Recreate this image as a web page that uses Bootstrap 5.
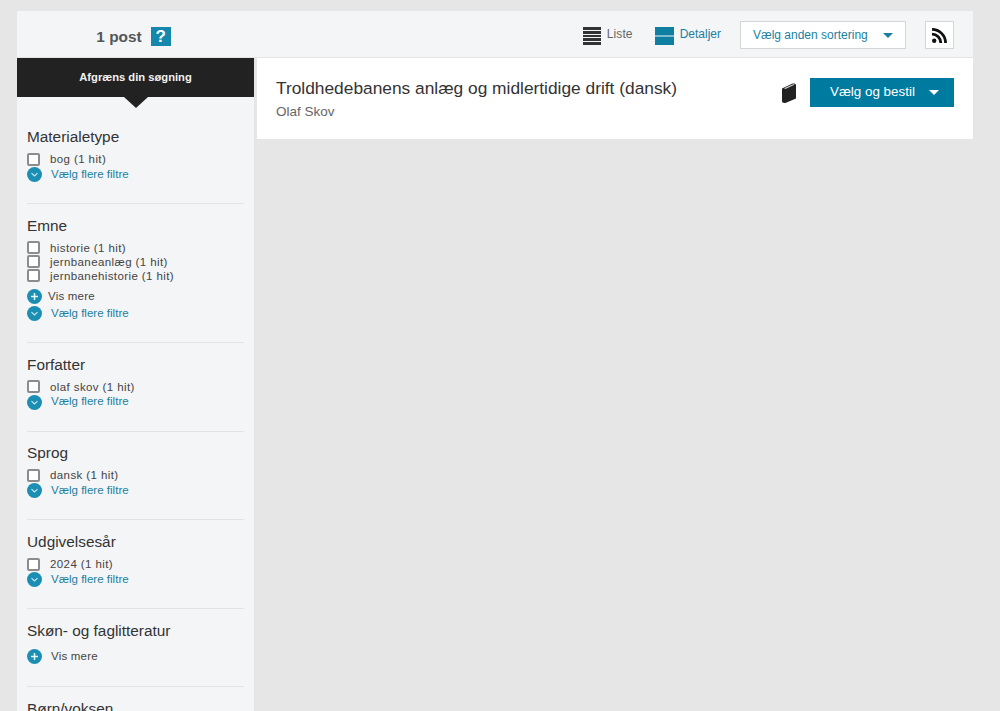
<!DOCTYPE html>
<html lang="da">
<head>
    <meta charset="UTF-8">
    <title>Søgeresultat</title>
    <link href="https://cdn.jsdelivr.net/npm/bootstrap@5.3.0/dist/css/bootstrap.min.css" rel="stylesheet">
    <style>
        html, body { height: 711px; overflow: hidden; }
        body { background: #e6e6e6; font-family: "Liberation Sans", Arial, sans-serif; color: #333; padding: 11px 27px 0 17px; }
        .top-bar { height: 47px; background: #f4f5f7; border-bottom: 1px solid #e2e3e5; }
        .hits-box { width: 237px; padding-right: 4px; margin-top: 6px; }
        .hits-count { font-size: 15.4px; font-weight: 700; color: #555; margin-right: 9px; }
        .help-box { width: 20px; height: 19px; background: #1487ad; color: #fff; font-size: 17px; font-weight: 700; line-height: 19px; text-align: center; }
        .view-opts { padding-right: 19px; height: 100%; }
        .view-link { font-size: 12px; line-height: 14px; letter-spacing: .1px; color: #666; text-decoration: none; margin-right: 22px; margin-top: 3px; }
        .view-link.on { color: #1b7f9f; margin-right: 19px; letter-spacing: 0; }
        .view-link svg { margin-right: 6px; }
        .view-link span { margin-bottom: 4px; }
        .sort-btn { width: 166px; height: 28px; background: #fff; border: 1px solid #d3d5d8; border-radius: 0; color: #1b7f9f; font-size: 12px; padding: 0 12px; margin: 2px 19px 0 0; }
        .sort-btn:hover { background: #fff; color: #1b7f9f; }
        .sort-btn::after { border-top-width: 5px; border-left-width: 5px; border-right-width: 5px; border-bottom: 0; margin: 0; }
        .rss-box { width: 29px; height: 28px; background: #fff; border: 1px solid #d3d5d8; margin-top: 2px; }
        .side-col { width: 237px; height: 654px; background: #f4f5f7; flex: none; overflow: hidden; }
        .side-head { position: relative; height: 39px; line-height: 39px; background: #222; color: #f2f2f2; font-size: 11.2px; font-weight: 700; text-align: center; margin-bottom: 30px; }
        .side-head::after { content: ""; position: absolute; left: 107px; top: 39px; border-top: 11px solid #222; border-left: 12px solid transparent; border-right: 12px solid transparent; }
        .facet { margin: 0 10px 11.8px; border-bottom: 1px solid #e1e3e6; padding-bottom: 21px; }
        .facet:last-child { border-bottom: 0; }
        .facet-title { font-size: 15.36px; line-height: 20px; font-weight: 400; color: #333; margin: 0 0 5px; }
        .facet-row { height: 14px; font-size: 11.5px; line-height: 14px; letter-spacing: .4px; color: #444; }
        .facet-row .form-check-input { width: 13px; height: 13px; margin: 0 10px 0 0; border: 2px solid #8c8c8c; border-radius: 2px; flex: none; }
        .facet-more { height: 17px; margin-top: 5px; font-size: 11.5px; letter-spacing: .2px; color: #444; }
        .facet-title + .facet-more { margin-top: 7px; }
        .facet-filter { height: 15px; margin-top: 1px; font-size: 11.55px; color: #1b7f9f; text-decoration: none; }
        .round-ico { margin-right: 9px; flex: none; }
        .facet-more .round-ico.tight { margin-right: 6px; }
        .result-box { height: 81px; background: #fff; margin-left: 3px; padding: 0 19px; flex: 1; }
        .result-title { font-size: 17.33px; line-height: 22px; font-weight: 400; color: #333; margin: 0 0 4px; }
        .result-author { font-size: 13.5px; line-height: 18px; color: #666; }
        .book-ico { margin: 25px 0 0 auto; }
        .order-btn { width: 144px; height: 29px; background: #007ba0; border: 0; border-radius: 0; color: #fff; font-size: 13.4px; padding: 0 15px 0 20px; margin: 20px 0 0 13px; }
        .order-btn:hover { background: #007ba0; color: #fff; }
        .order-btn::after { border-top-width: 5px; border-left-width: 5px; border-right-width: 5px; border-bottom: 0; margin: 0; }
    </style>
</head>
<body>
<svg width="0" height="0" class="position-absolute">
    <symbol id="ico-down" viewBox="0 0 15 15"><circle cx="7.5" cy="7.5" r="7.5" fill="#1a8fb3"/><path d="M4.5 6.2 7.5 9l3-2.800" fill="none" stroke="#cfe9f2" stroke-width="1.100"/></symbol>
    <symbol id="ico-plus" viewBox="0 0 15 15"><circle cx="7.500" cy="7.500" r="7.500" fill="#1a8fb3"/><path d="M7.500 4v7M4 7.500h7" stroke="#e8f5f9" stroke-width="1.500"/></symbol>
</svg>

<div class="top-bar d-flex align-items-center">
    <div class="hits-box d-flex align-items-center justify-content-center">
        <span class="hits-count">1 post</span>
        <span class="help-box">?</span>
    </div>
    <div class="view-opts ms-auto d-flex align-items-center">
        <a href="#" class="view-link d-flex align-items-center">
            <svg width="18" height="18" viewBox="0 0 18 18"><path d="M0 0h18v3H0zM0 4h18v3H0zM0 8h18v2H0zM0 11h18v3H0zM0 15h18v3H0z" fill="#333"/></svg>
            <span>Liste</span>
        </a>
        <a href="#" class="view-link on d-flex align-items-center">
            <svg width="19" height="18" viewBox="0 0 19 18"><path d="M0 0h19v8.500H0zM0 9.500h19V18H0z" fill="#0e7ea3"/></svg>
            <span>Detaljer</span>
        </a>
        <button type="button" class="btn sort-btn dropdown-toggle d-flex align-items-center justify-content-between">Vælg anden sortering</button>
        <div class="rss-box d-flex align-items-center justify-content-center">
            <svg width="15" height="15" viewBox="0 0 15 15" fill="none" stroke="#111" stroke-width="2.800"><circle cx="2.200" cy="12.800" r="2.200" fill="#111" stroke="none"/><path d="M0 6.200a8.800 8.800 0 0 1 8.800 8.800"/><path d="M0 1.400A13.600 13.600 0 0 1 13.600 15"/></svg>
        </div>
    </div>
</div>

<div class="d-flex align-items-start">
    <div class="side-col">
        <div class="side-head">Afgræns din søgning</div>

        <div class="facet">
            <h3 class="facet-title">Materialetype</h3>
            <label class="facet-row d-flex align-items-center"><input class="form-check-input" type="checkbox">bog (1 hit)</label>
            <a href="#" class="facet-filter d-flex align-items-center"><svg class="round-ico" width="15" height="15"><use href="#ico-down"/></svg>Vælg flere filtre</a>
        </div>

        <div class="facet">
            <h3 class="facet-title">Emne</h3>
            <label class="facet-row d-flex align-items-center"><input class="form-check-input" type="checkbox">historie (1 hit)</label>
            <label class="facet-row d-flex align-items-center"><input class="form-check-input" type="checkbox">jernbaneanlæg (1 hit)</label>
            <label class="facet-row d-flex align-items-center"><input class="form-check-input" type="checkbox">jernbanehistorie (1 hit)</label>
            <div class="facet-more d-flex align-items-center"><svg class="round-ico tight" width="15" height="15"><use href="#ico-plus"/></svg>Vis mere</div>
            <a href="#" class="facet-filter d-flex align-items-center"><svg class="round-ico" width="15" height="15"><use href="#ico-down"/></svg>Vælg flere filtre</a>
        </div>

        <div class="facet">
            <h3 class="facet-title">Forfatter</h3>
            <label class="facet-row d-flex align-items-center"><input class="form-check-input" type="checkbox">olaf skov (1 hit)</label>
            <a href="#" class="facet-filter d-flex align-items-center"><svg class="round-ico" width="15" height="15"><use href="#ico-down"/></svg>Vælg flere filtre</a>
        </div>

        <div class="facet">
            <h3 class="facet-title">Sprog</h3>
            <label class="facet-row d-flex align-items-center"><input class="form-check-input" type="checkbox">dansk (1 hit)</label>
            <a href="#" class="facet-filter d-flex align-items-center"><svg class="round-ico" width="15" height="15"><use href="#ico-down"/></svg>Vælg flere filtre</a>
        </div>

        <div class="facet">
            <h3 class="facet-title">Udgivelsesår</h3>
            <label class="facet-row d-flex align-items-center"><input class="form-check-input" type="checkbox">2024 (1 hit)</label>
            <a href="#" class="facet-filter d-flex align-items-center"><svg class="round-ico" width="15" height="15"><use href="#ico-down"/></svg>Vælg flere filtre</a>
        </div>

        <div class="facet">
            <h3 class="facet-title">Skøn- og faglitteratur</h3>
            <div class="facet-more d-flex align-items-center"><svg class="round-ico" width="15" height="15"><use href="#ico-plus"/></svg>Vis mere</div>
        </div>

        <div class="facet">
            <h3 class="facet-title">Børn/voksen</h3>
        </div>
    </div>

    <div class="result-box d-flex align-items-start">
        <div class="align-self-center">
            <h2 class="result-title">Troldhedebanens anlæg og midlertidige drift (dansk)</h2>
            <div class="result-author">Olaf Skov</div>
        </div>
        <svg class="book-ico" width="16" height="20" viewBox="0 0 16 20"><path d="M1 5.500 11 .8c2-.8 4 0 4 1.200v13.500L5 19.700c-2 .6-4 .2-4-1.400z" fill="#222"/><path d="M3 5.300 12 1.200l2 .3L4.500 6z" fill="#ccc"/></svg>
        <button type="button" class="btn order-btn dropdown-toggle d-flex align-items-center justify-content-between">Vælg og bestil</button>
    </div>
</div>
</body>
</html>
